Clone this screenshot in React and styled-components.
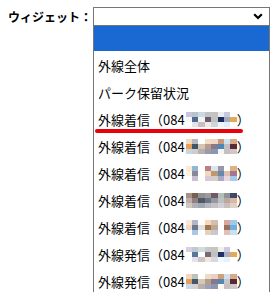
import styled, { createGlobalStyle } from "styled-components";

const GlobalStyle = createGlobalStyle`
    html, body{
        margin: 0;
        padding: 0;
        background: #ffffff;
        overflow: hidden;
    }

    body{
        font-family: "Noto Sans CJK JP", "Noto Sans", sans-serif;
        color: #000000;
    }
`;

const mosaics = [
    [
        ["#c9c5da", "#b9c1cb", "#cadade", "#c1c3c6", "#c6c3bf", "#eaeef0", "#cac8df", "#ffffff"],
        ["#f4f6f8", "#4c6b8f", "#f6f4f2", "#6b5b70", "#bfc3bf", "#1b2b62", "#a3aab9", "#e2a95f"],
        ["#ffffff", "#e6e2ea", "#c7bfc0", "#f0ece4", "#d0d4dc", "#eef6fc", "#e4eef6", "#ffffff"],
    ],
    [
        ["#f2dcc0", "#b7b9bb", "#ffffff", "#f2dcc4", "#f0d8c8", "#c89878", "#cfe2f0", "#d8a888"],
        ["#e8a058", "#3d5768", "#d8c4b0", "#b89c8c", "#8a7888", "#4a88b8", "#c0c0c0", "#5a2838"],
        ["#c8d4e0", "#d0cccc", "#b8b0b0", "#9a9aa8", "#8898b0", "#fcf4ec", "#c4c0c0", "#d0c8c8"],
    ],
    [
        ["#f8ecd8", "#94b4d8", "#ffffff", "#b88080", "#d8e4f0", "#9898a8", "#ffffff", "#e0b080"],
        ["#fff4e0", "#8a8894", "#ffffff", "#f0d8c0", "#c09870", "#6888b0", "#e0c0b0", "#a07890"],
        ["#ffffff", "#c8c0d0", "#ffffff", "#d8c8d8", "#d4d0c8", "#a8a8c8", "#e8d8e0", "#a8c8e8"],
    ],
    [
        ["#a89088", "#786050", "#909090", "#a09898", "#705868", "#b0c0b8", "#909098", "#404868"],
        ["#c0b0a8", "#908080", "#505868", "#687888", "#909aa0", "#c0c0c0", "#b8a8a0", "#d8b8a8"],
        ["#d0c8c0", "#b0b0b8", "#a0a8b0", "#b8b8c0", "#c8c0c0", "#d0d0d8", "#c8c0b8", "#e0d0c8"],
    ],
    [
        ["#f8e8d8", "#b0b8c8", "#ffffff", "#f8d8b8", "#d0c0b0", "#ffffff", "#d8a8a0", "#a0c8e8"],
        ["#f0d8c8", "#707888", "#e0e0e0", "#a07850", "#c0a890", "#ffffff", "#987060", "#70b0e0"],
        ["#ffffff", "#a8c8e8", "#ffffff", "#e8d0c0", "#c8c8d0", "#ffffff", "#e0c0b8", "#c8e0f0"],
    ],
    [
        ["#d8d0e0", "#c0c8d0", "#d0dce0", "#c8c8c8", "#c8c4c0", "#f0f0e8", "#d0c8e0", "#ffffff"],
        ["#ffffff", "#587898", "#ffffff", "#786878", "#c0c0c0", "#203068", "#a8b0c0", "#e0a860"],
        ["#ffffff", "#e8e0e8", "#d0c4c4", "#f0e8e0", "#d8d8e0", "#f0f8ff", "#e8f0f8", "#ffffff"],
    ],
    [
        ["#f0d8c0", "#c0c0c0", "#ffffff", "#f0dcc4", "#e8d0c8", "#d0a078", "#d0e0f0", "#d8a888"],
        ["#e0a060", "#405868", "#d8c8b0", "#b0a090", "#887888", "#5088b8", "#c8c8c8", "#582838"],
        ["#c8d8e8", "#d8d0d0", "#b8b0b0", "#a0a0b0", "#8898b0", "#fff8f0", "#c8c0c0", "#d0c8c8"],
    ],
];

function Mosaic({ colors }){
    return (
        <MosaicGrid>
            {colors.flat().map((c, i) => <Cell key={i} color={c} />)}
        </MosaicGrid>
    );
}

function Call({ kind, colors, marked }){
    return (
        <Option>
            {marked && <Underline />}
            <span>{kind}（084</span>
            <Mosaic colors={colors} />
            <span>）</span>
        </Option>
    );
}

export default function App(){
    return (
        <>
            <GlobalStyle />
            <Page>
                <Label>ウィジェット：</Label>
                <Control>
                    <Select>
                        <Chevron width="10" height="7" viewBox="0 0 10 7">
                            <path d="M1.2 1.2 L5 5 L8.8 1.2" fill="none" stroke="#000" strokeWidth="2.2" />
                        </Chevron>
                    </Select>
                    <List>
                        <Option selected />
                        <Option>外線全体</Option>
                        <Option>パーク保留状況</Option>
                        <Call kind="外線着信" colors={mosaics[0]} marked />
                        <Call kind="外線着信" colors={mosaics[1]} />
                        <Call kind="外線着信" colors={mosaics[2]} />
                        <Call kind="外線着信" colors={mosaics[3]} />
                        <Call kind="外線着信" colors={mosaics[4]} />
                        <Call kind="外線発信" colors={mosaics[5]} />
                        <Call kind="外線発信" colors={mosaics[6]} />
                    </List>
                </Control>
            </Page>
        </>
    );
}

const Page = styled.div`
    display: flex;
    align-items: flex-start;
    padding: 7px 0 0 8px;
`;

const Label = styled.div`
    height: 19px;
    line-height: 19px;
    font-size: 12px;
    font-weight: 700;
    width: 85px;
    white-space: nowrap;
`;

const Control = styled.div`
    width: 177px;
    display: flex;
    flex-direction: column;
`;

const Select = styled.div`
    box-sizing: border-box;
    height: 19px;
    border: 1px solid #767676;
    background: #ffffff;
    display: flex;
    align-items: center;
    justify-content: flex-end;
    padding-right: 6px;
`;

const Chevron = styled.svg`
    display: block;
`;

const List = styled.div`
    box-sizing: border-box;
    border-left: 1px solid #767676;
    border-right: 1px solid #767676;
    background: #ffffff;
    display: flex;
    flex-direction: column;
`;

const Option = styled.div`
    position: relative;
    height: ${props => props.selected ? "25px" : "27px"};
    margin-bottom: ${props => props.selected ? "1px" : "0"};
    background: ${props => props.selected ? "#1a68d1" : "transparent"};
    padding-left: 4px;
    display: flex;
    align-items: center;
    font-size: 13px;
    white-space: nowrap;
`;

const MosaicGrid = styled.div`
    display: grid;
    grid-template-columns: repeat(8, 6.4px);
    grid-template-rows: repeat(3, 5.3px);
    margin-left: 1px;
`;

const Cell = styled.div`
    background: ${props => props.color};
`;

const Underline = styled.div`
    position: absolute;
    left: 1px;
    top: 23px;
    width: 148px;
    height: 4px;
    border-radius: 2px;
    background: #e8000a;
`;
